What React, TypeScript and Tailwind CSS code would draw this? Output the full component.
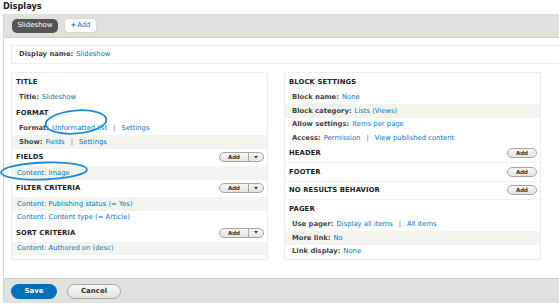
import React from "react";

const LINK = "text-[#0074bd]";

function Heading({ label, add }: { label: string; add?: "split" | "plain" }) {
  return (
    <div className="h-[17.5px] flex items-center justify-between pl-[4px] pr-[3px]">
      <span className="font-bold uppercase text-[#222] tracking-[0.02em]">{label}</span>
      {add === "split" && (
        <span className="flex h-[10px] w-[45px] rounded-full border border-[#a6a6a6] bg-gradient-to-b from-[#f8f8f5] to-[#e4e3dc] overflow-hidden">
          <span className="flex-1 flex items-center justify-center text-[5.5px] font-bold text-[#333]">Add</span>
          <span className="w-[15px] border-l border-[#a6a6a6] flex items-center justify-center">
            <svg width="4" height="3" viewBox="0 0 4 3">
              <path d="M0 0 L4 0 L2 2.5 Z" fill="#333" />
            </svg>
          </span>
        </span>
      )}
      {add === "plain" && (
        <span className="flex h-[10px] w-[30px] items-center justify-center rounded-full border border-[#a6a6a6] bg-gradient-to-b from-[#f8f8f5] to-[#e4e3dc] text-[5.5px] font-bold text-[#333]">
          Add
        </span>
      )}
    </div>
  );
}

function Row({ children, shade, indent = true }: { children: React.ReactNode; shade?: boolean; indent?: boolean }) {
  return (
    <div className={`h-[13.5px] flex items-center ${indent ? "pl-[7px]" : "pl-[5px]"} ${shade ? "bg-[#f3f4ee]" : ""}`}>
      {children}
    </div>
  );
}

function Label({ children }: { children: React.ReactNode }) {
  return <span className="font-bold text-[#444] mr-[3px]">{children}</span>;
}

function Sep() {
  return <span className="mx-[6px] text-[#777]">|</span>;
}

export default function App() {
  return (
    <div className="relative w-[559px] h-[305px] overflow-hidden bg-white font-['DejaVu_Sans',sans-serif] text-[6.8px] text-[#333]">
      <h2 className="h-[14px] pl-[3px] text-[8.2px] font-bold leading-[13px] text-[#222]">Displays</h2>
      <div className="ml-[3px] mr-[-20px] border-l border-[#d6d6d0]">
        {/* display tabs */}
        <div className="h-[24px] flex items-center gap-[7px] pl-[8px] bg-[#e1e1db] border-b border-[#cfcfc9]">
          <span className="h-[14px] w-[46px] flex items-center justify-center rounded-[5px] bg-[#555] text-[7px] text-white">Slideshow</span>
          <span className="h-[13px] w-[31px] flex items-center justify-center rounded-[4px] bg-white text-[#0074bd] shadow-[0_0_0_1px_#d8d8d2]">
            <span className="font-bold mr-[1px]">+</span>Add
          </span>
        </div>

        <div className="px-[7px] pt-[7px]">
          <div className="h-[19px] flex items-center pl-[7px] border border-[#eeeeea]">
            <Label>Display name:</Label>
            <span className={LINK}>Slideshow</span>
          </div>

          <div className="mt-[8px] flex gap-[16px]">
            {/* left column */}
            <div className="w-[257px] border border-[#eeeeea] pb-[1px]">
              <Heading label="Title" />
              <Row><Label>Title:</Label><span className={LINK}>Slideshow</span></Row>
              <Heading label="Format" />
              <Row><Label>Format:</Label><span className={LINK}>Unformatted list</span><Sep /><span className={LINK}>Settings</span></Row>
              <Row shade><Label>Show:</Label><span className={LINK}>Fields</span><Sep /><span className={LINK}>Settings</span></Row>
              <Heading label="Fields" add="split" />
              <Row shade indent={false}><span className={LINK}>Content: Image</span></Row>
              <Heading label="Filter criteria" add="split" />
              <Row shade indent={false}><span className={LINK}>Content: Publishing status (= Yes)</span></Row>
              <Row indent={false}><span className={LINK}>Content: Content type (= Article)</span></Row>
              <Heading label="Sort criteria" add="split" />
              <Row shade indent={false}><span className={LINK}>Content: Authored on (desc)</span></Row>
            </div>

            {/* right column */}
            <div className="w-[257px] border border-[#eeeeea] pb-[1px]">
              <Heading label="Block settings" />
              <Row><Label>Block name:</Label><span className={LINK}>None</span></Row>
              <Row shade><Label>Block category:</Label><span className={LINK}>Lists (Views)</span></Row>
              <Row><Label>Allow settings:</Label><span className={LINK}>Items per page</span></Row>
              <Row><Label>Access:</Label><span className={LINK}>Permission</span><Sep /><span className={LINK}>View published content</span></Row>
              <Heading label="Header" add="plain" />
              <div className="border-t border-[#f0f0ec]"><Heading label="Footer" add="plain" /></div>
              <div className="border-t border-[#f0f0ec]"><Heading label="No results behavior" add="plain" /></div>
              <div className="border-t border-[#f0f0ec]"><Heading label="Pager" /></div>
              <Row><Label>Use pager:</Label><span className={LINK}>Display all items</span><Sep /><span className={LINK}>All items</span></Row>
              <Row shade><Label>More link:</Label><span className={LINK}>No</span></Row>
              <Row><Label>Link display:</Label><span className={LINK}>None</span></Row>
            </div>
          </div>
        </div>

        {/* actions */}
        <div className="mt-[18px] h-[25px] flex items-center gap-[10px] pl-[7px] bg-[#e1e1db] border-t border-[#d2d2cc]">
          <span className="h-[15px] w-[46px] flex items-center justify-center rounded-full bg-[#0071b8] text-[7px] font-bold text-white">Save</span>
          <span className="h-[15px] w-[54px] flex items-center justify-center rounded-full border border-[#a6a6a6] bg-gradient-to-b from-[#f8f8f5] to-[#e4e3dc] text-[7px] font-bold text-[#333]">Cancel</span>
        </div>
      </div>

      {/* annotation ellipses */}
      <svg className="absolute left-0 top-0 pointer-events-none" width="559" height="305">
        <ellipse cx="76" cy="122" rx="30.5" ry="11.5" transform="rotate(-5 76 122)" fill="none" stroke="#1a8be0" strokeWidth="1.8" />
        <ellipse cx="44" cy="171" rx="43" ry="8.5" transform="rotate(-2 44 171)" fill="none" stroke="#1a8be0" strokeWidth="1.8" />
      </svg>
    </div>
  );
}
